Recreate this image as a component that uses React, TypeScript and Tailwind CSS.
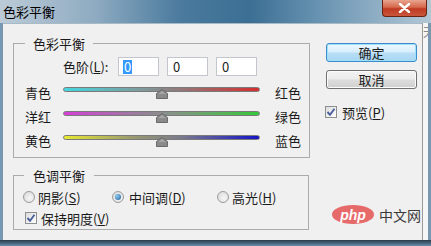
import React from "react";

const CheckBox = () => (
  <span className="w-[12px] h-[12px] shrink-0 border border-[#8e8f8f] bg-[linear-gradient(135deg,#dcdcdc,#ffffff)] flex items-center justify-center">
    <svg width="10" height="10" viewBox="0 0 10 10">
      <path d="M1.5 5 L4 7.8 L8.5 1.8" stroke="#4a5e9c" strokeWidth="1.9" fill="none" />
    </svg>
  </span>
);

const Radio = ({ checked }: { checked?: boolean }) => (
  <span className="w-[12px] h-[12px] shrink-0 rounded-full border border-[#9c9c9c] bg-[radial-gradient(circle_at_60%_60%,#f6f6f6,#d6d6d6)] flex items-center justify-center">
    {checked && (
      <span className="w-[6px] h-[6px] rounded-full bg-[radial-gradient(circle_at_35%_35%,#8ccaf2,#1f5f99)]" />
    )}
  </span>
);

const Thumb = () => (
  <svg className="absolute left-[92px] top-[1px]" width="12" height="10" viewBox="0 0 12 10">
    <path d="M6 0.5 L11.5 4.5 L11.5 9.5 L0.5 9.5 L0.5 4.5 Z" fill="#8a8a8a" stroke="#6a6a6a" strokeWidth="1" />
    <path d="M6 2 L10 5 L2 5 Z" fill="#a6a6a6" />
  </svg>
);

const SliderRow = ({ left, right, track }: { left: string; right: string; track: string }) => (
  <div className="flex items-start h-[24px]">
    <span className="w-[38px] mt-[6px] leading-[17px]">{left}</span>
    <div className={`relative w-[197px] h-[5px] mt-[9px] rounded-full border border-[#7a7a7a] ${track}`}>
      <Thumb />
    </div>
    <span className="ml-[15px] mt-[6px] leading-[17px]">{right}</span>
  </div>
);

export default function App() {
  return (
    <div className="w-[431px] h-[246px] overflow-hidden flex flex-col text-[13px] text-[#1b1b1b] font-['Noto_Sans_CJK_SC',sans-serif]">
      {/* title bar */}
      <div className="h-[23px] flex items-start bg-[linear-gradient(90deg,#bccbd7_0%,#8eabc1_22%,#4a7a9e_42%,#3c6f94_58%,#6b95b3_75%,#b3c7d5_100%)]">
        <span className="pl-[3px] leading-[23px] text-black">色彩平衡</span>
        <div className="ml-auto mr-[4px] w-[45px] h-[17px] rounded-b-[4px] border border-t-0 border-[#6a2214] bg-[linear-gradient(180deg,#e9a48f_0%,#d5684c_45%,#bf3a22_55%,#c9553a_100%)] flex items-center justify-center">
          <svg width="13" height="10" viewBox="0 0 13 10">
            <path d="M2 1 L11 9 M11 1 L2 9" stroke="#ffffff" strokeWidth="2.4" strokeLinecap="round" />
          </svg>
        </div>
      </div>

      <div className="flex flex-1">
        <div className="w-[3px] bg-[#7898b2]" />
        <div className="relative flex-1 flex bg-[#f0f0f0] border-t border-[#a9bac7]">
          {/* left column */}
          <div className="flex flex-col">
            <fieldset className="ml-[10px] mt-[11px] w-[297px] border border-[#ababab] pl-[11px] pt-[5px] pb-[7px]">
              <legend className="px-[8px] leading-[17px]">色彩平衡</legend>
              <div className="flex items-center h-[19px] pl-[38px]">
                <span className="w-[55px] leading-[17px]">
                  色阶(<span className="underline">L</span>):
                </span>
                <div className="w-[41px] h-[19px] border border-[#c3c6cc] bg-white flex items-center pl-[4px]">
                  <span className="bg-[#3399ff] text-white leading-[14px] px-[1px]">0</span>
                </div>
                <div className="ml-[8px] w-[41px] h-[19px] border border-[#c3c6cc] bg-white flex items-center pl-[5px]">
                  0
                </div>
                <div className="ml-[8px] w-[41px] h-[19px] border border-[#c3c6cc] bg-white flex items-center pl-[5px]">
                  0
                </div>
              </div>
              <div className="mt-[2px] flex flex-col">
                <SliderRow
                  left="青色"
                  right="红色"
                  track="bg-[linear-gradient(90deg,#45d6de,#7f9a9c_40%,#8c8080_55%,#d52f2f)]"
                />
                <SliderRow
                  left="洋红"
                  right="绿色"
                  track="bg-[linear-gradient(90deg,#d640d6,#96809a_40%,#7f9a80_60%,#35c93a)]"
                />
                <SliderRow
                  left="黄色"
                  right="蓝色"
                  track="bg-[linear-gradient(90deg,#e8e832,#9a9a70_35%,#7a7a8c_60%,#1414c8)]"
                />
              </div>
            </fieldset>

            <fieldset className="ml-[10px] mt-[9px] w-[296px] border border-[#ababab] pl-[9px] pt-[4px] pb-[2px]">
              <legend className="ml-[1px] px-[9px] leading-[17px]">色调平衡</legend>
              <div className="flex items-center h-[18px]">
                <div className="w-[89px] flex items-center gap-[3px]">
                  <Radio />
                  <span className="leading-[17px]">
                    阴影(<span className="underline">S</span>)
                  </span>
                </div>
                <div className="w-[105px] flex items-center gap-[5px]">
                  <Radio checked />
                  <span className="leading-[17px]">
                    中间调(<span className="underline">D</span>)
                  </span>
                </div>
                <div className="flex items-center gap-[3px]">
                  <Radio />
                  <span className="leading-[17px]">
                    高光(<span className="underline">H</span>)
                  </span>
                </div>
              </div>
              <div className="mt-[3px] ml-[2px] flex items-center h-[18px] gap-[4px]">
                <CheckBox />
                <span className="leading-[17px]">
                  保持明度(<span className="underline">V</span>)
                </span>
              </div>
            </fieldset>
          </div>

          {/* right column */}
          <div className="ml-[16px] mt-[19px] flex flex-col w-[91px]">
            <button className="h-[19px] rounded-[3px] border border-[#3c8ccb] bg-[linear-gradient(180deg,#eef8fe_0%,#d6eefc_48%,#b8def6_52%,#a9d6f2_100%)] shadow-[inset_0_0_0_1px_#9fe0fb] leading-[17px] text-[#1b1b1b]">
              确定
            </button>
            <button className="mt-[8px] h-[19px] rounded-[3px] border border-[#707070] bg-[linear-gradient(180deg,#f3f3f3_0%,#ebebeb_48%,#dddddd_52%,#cfcfcf_100%)] shadow-[inset_0_0_0_1px_#fbfbfb] leading-[17px] text-[#1b1b1b]">
              取消
            </button>
            <div className="mt-[14px] -ml-[1px] flex items-center h-[18px] gap-[5px]">
              <CheckBox />
              <span className="leading-[17px]">
                预览(<span className="underline">P</span>)
              </span>
            </div>
          </div>

          {/* watermark */}
          <div className="absolute left-[329px] top-[181px] flex items-center gap-[5px]">
            <div className="w-[42px] h-[19px] rounded-[50%] bg-[#e66a6a] flex items-center justify-center">
              <span className="text-white italic font-bold text-[14px] leading-[14px] font-['Liberation_Sans',sans-serif]">php</span>
            </div>
            <span className="text-[14px] leading-[16px] text-[#3a3a3a]">中文网</span>
          </div>
        </div>
        <div className="w-[6px] border-l border-[#9a9a9a] bg-[#f6f6f6] overflow-hidden">
          <span className="block mt-[2px] text-[12px] leading-[14px] text-[#888]">天</span>
        </div>
        <div className="w-[3px] bg-[#7898b2]" />
      </div>
      <div className="h-[6px] bg-[linear-gradient(180deg,#2c3a46,#43627c_50%,#6e8fa9)]" />
    </div>
  );
}
